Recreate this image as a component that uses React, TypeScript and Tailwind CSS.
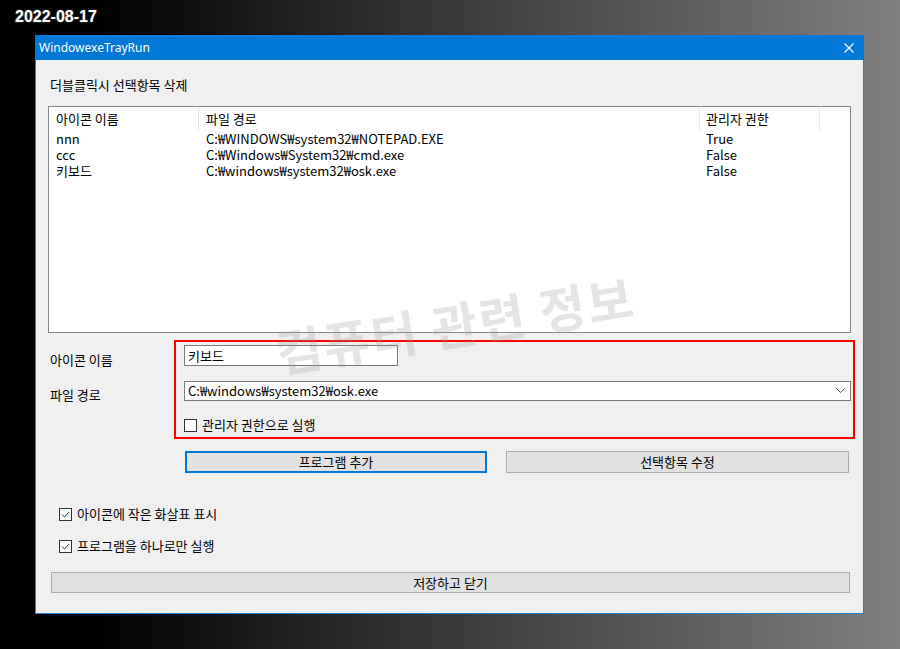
import React from 'react';

const rows = [
  { name: 'nnn', path: 'C:₩WINDOWS₩system32₩NOTEPAD.EXE', admin: 'True' },
  { name: 'ccc', path: 'C:₩Windows₩System32₩cmd.exe', admin: 'False' },
  { name: '키보드', path: 'C:₩windows₩system32₩osk.exe', admin: 'False' },
];

const CheckBox = ({ checked }: { checked?: boolean }) => (
  <div className="w-[13px] h-[13px] border border-[#333] bg-white shrink-0 flex items-center justify-center">
    {checked && (
      <svg width="11" height="11" viewBox="0 0 11 11">
        <path d="M2 5.5 L4.5 8 L9 3" fill="none" stroke="#333" strokeWidth="1" />
      </svg>
    )}
  </div>
);

export default function App() {
  return (
    <div className="relative w-[900px] h-[649px] overflow-hidden bg-[linear-gradient(to_right,#000_0px,#000_90px,#808080_900px)] font-['Noto_Sans_CJK_KR',sans-serif] text-[13px] leading-[16px] text-black">
      <div className="pl-[15px] pt-[7px] h-[35px] font-['Liberation_Sans',sans-serif] font-bold text-[16px] leading-[20px] text-white [text-shadow:0_0_2px_#666]">
        2022-08-17
      </div>

      <div className="ml-[35px] w-[829px] h-[579px] border border-[#1a82d6] bg-[#f0f0f0] flex flex-col">
        {/* title bar */}
        <div className="h-[25px] -mt-px -mx-px bg-[#0078d7] flex items-center justify-between pl-[4px] pr-[10px] shrink-0">
          <span className="font-['Noto_Sans',sans-serif] text-white text-[12px]">WindowexeTrayRun</span>
          <svg width="10" height="10" viewBox="0 0 10 10">
            <path d="M0.5 0.5 L9.5 9.5 M9.5 0.5 L0.5 9.5" stroke="#fff" strokeWidth="1.1" />
          </svg>
        </div>

        <div className="flex flex-col pl-[12px]">
          <div className="mt-[17px] pl-[2px]">더블클릭시 선택항목 삭제</div>

          {/* list view */}
          <div className="mt-[13px] w-[803px] h-[227px] border border-[#828790] bg-white">
            <div className="flex h-[24px] items-center">
              <div className="w-[150px] h-[22px] pl-[7px] border-r border-[#e5e5e5] flex items-center">아이콘 이름</div>
              <div className="w-[501px] h-[22px] pl-[7px] border-r border-[#e5e5e5] flex items-center">파일 경로</div>
              <div className="w-[120px] h-[22px] pl-[6px] border-r border-[#e5e5e5] flex items-center">관리자 권한</div>
            </div>
            {rows.map((r) => (
              <div key={r.name} className="flex h-[16px] items-center">
                <div className="w-[150px] pl-[7px]">{r.name}</div>
                <div className="w-[501px] pl-[7px]">{r.path}</div>
                <div className="w-[120px] pl-[6px]">{r.admin}</div>
              </div>
            ))}
          </div>

          {/* edit area */}
          <div className="mt-[7px] flex">
            <div className="w-[126px] pl-[2px] pt-[12px] flex flex-col">
              <div>아이콘 이름</div>
              <div className="mt-[19px]">파일 경로</div>
            </div>
            <div className="w-[681px] h-[99px] border-2 border-[#ff0000] pl-[8px] pt-[3px] flex flex-col">
              <div className="w-[214px] h-[21px] border border-[#7a7a7a] bg-white pl-[3px] flex items-center">키보드</div>
              <div className="mt-[15px] w-[667px] h-[20px] border border-[#7a7a7a] bg-white pl-[3px] pr-[5px] flex items-center justify-between">
                <span>C:₩windows₩system32₩osk.exe</span>
                <svg width="9" height="6" viewBox="0 0 9 6">
                  <path d="M0.5 0.5 L4.5 4.5 L8.5 0.5" fill="none" stroke="#555" strokeWidth="1" />
                </svg>
              </div>
              <div className="mt-[16px] flex items-center gap-[5px]">
                <CheckBox />
                <span>관리자 권한으로 실행</span>
              </div>
            </div>
          </div>

          {/* buttons */}
          <div className="mt-[12px] ml-[137px] flex gap-[19px]">
            <div className="w-[302px] h-[22px] border-2 border-[#0078d7] bg-[#e1e1e1] flex items-center justify-center">프로그램 추가</div>
            <div className="w-[343px] h-[22px] border border-[#adadad] bg-[#e1e1e1] flex items-center justify-center">선택항목 수정</div>
          </div>

          <div className="mt-[33px] ml-[11px] flex items-center gap-[5px]">
            <CheckBox checked />
            <span>아이콘에 작은 화살표 표시</span>
          </div>
          <div className="mt-[16px] ml-[11px] flex items-center gap-[5px]">
            <CheckBox checked />
            <span>프로그램을 하나로만 실행</span>
          </div>

          <div className="mt-[18px] ml-[3px] w-[799px] h-[21px] border border-[#adadad] bg-[#e1e1e1] flex items-center justify-center">
            저장하고 닫기
          </div>
        </div>
      </div>

      {/* watermark */}
      <div className="absolute left-[276px] top-[326px] origin-left -rotate-[9deg] font-bold text-[50px] tracking-[2px] leading-none whitespace-nowrap text-[rgba(150,150,150,0.25)] pointer-events-none">
        컴퓨터 관련 정보
      </div>
    </div>
  );
}
